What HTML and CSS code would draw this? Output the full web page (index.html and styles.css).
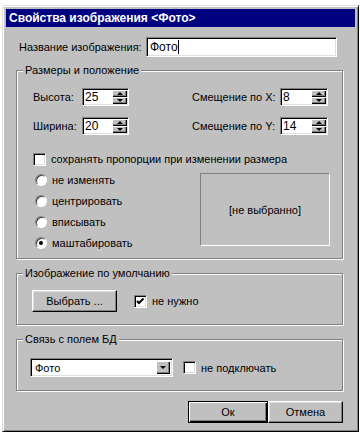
FILE: index.html
```html
<!DOCTYPE html>
<html lang="ru">
<head>
    <meta charset="UTF-8">
    <title>Свойства изображения</title>
    <link rel="stylesheet" href="styles.css">
</head>
<body>
    <div class="window">
        <div class="titlebar">Свойства изображения &lt;Фото&gt;</div>
        <div class="content">
            <div class="name-row">
                <label>Название изображения:</label>
                <div class="field name"><span>Фото</span><span class="caret"></span></div>
            </div>

            <fieldset class="group sizes">
                <legend>Размеры и положение</legend>
                <div class="group-body">
                    <div class="spin-grid">
                        <div class="spin-item left">
                            <label>Высота:</label>
                            <div class="field spin"><span class="val">25</span><div class="spin-btns"><span class="up"></span><span class="down"></span></div></div>
                        </div>
                        <div class="spin-item right">
                            <label>Смещение по X:</label>
                            <div class="field spin"><span class="val">8</span><div class="spin-btns"><span class="up"></span><span class="down"></span></div></div>
                        </div>
                        <div class="spin-item left">
                            <label>Ширина:</label>
                            <div class="field spin"><span class="val">20</span><div class="spin-btns"><span class="up"></span><span class="down"></span></div></div>
                        </div>
                        <div class="spin-item right">
                            <label>Смещение по Y:</label>
                            <div class="field spin"><span class="val">14</span><div class="spin-btns"><span class="up"></span><span class="down"></span></div></div>
                        </div>
                    </div>

                    <div class="check-row keep">
                        <span class="checkbox"></span>
                        <span>сохранять пропорции при изменении размера</span>
                    </div>

                    <div class="mode-row">
                        <div class="radios">
                            <div class="radio-row"><span class="radio"></span>не изменять</div>
                            <div class="radio-row"><span class="radio"></span>центрировать</div>
                            <div class="radio-row"><span class="radio"></span>вписывать</div>
                            <div class="radio-row"><span class="radio checked"></span>маштабировать</div>
                        </div>
                        <div class="preview">[не выбранно]</div>
                    </div>
                </div>
            </fieldset>

            <fieldset class="group default-img">
                <legend>Изображение по умолчанию</legend>
                <div class="group-body row">
                    <button type="button" class="btn pick">Выбрать ...</button>
                    <div class="check-row">
                        <span class="checkbox">
                            <svg width="9" height="9" viewBox="0 0 9 9"><path d="M1 4 L3 6 L7.5 1.5" fill="none" stroke="#000" stroke-width="2"/></svg>
                        </span>
                        <span>не нужно</span>
                    </div>
                </div>
            </fieldset>

            <fieldset class="group db-link">
                <legend>Связь с полем БД</legend>
                <div class="group-body row">
                    <div class="field combo"><span class="val">Фото</span><span class="drop"></span></div>
                    <div class="check-row">
                        <span class="checkbox"></span>
                        <span>не подключать</span>
                    </div>
                </div>
            </fieldset>

            <div class="buttons">
                <button type="button" class="btn ok">Ок</button>
                <button type="button" class="btn cancel">Отмена</button>
            </div>
        </div>
    </div>
</body>
</html>
```

FILE: styles.css
```css
body {
    margin: 0;
    background-color: #fff;
    font-family: 'Liberation Sans', Arial, sans-serif;
    font-size: 11px;
    color: #000;
    white-space: nowrap;
}
.window {
    margin: 5px 0 0 2px;
    width: 357px;
    height: 427px;
    box-sizing: border-box;
    padding: 3px;
    background-color: #c0c0c0;
    border: 1px solid;
    border-color: #dfdfdf #000 #000 #dfdfdf;
    box-shadow: inset 1px 1px #fff, inset -1px -1px #808080;
}
.titlebar {
    height: 18px;
    line-height: 18px;
    padding-left: 3px;
    background-color: #000080;
    color: #fff;
    font-weight: bold;
    font-size: 12px;
}
.content {
    padding: 10px 12px 0 10px;
}

/* sunken white box */
.field {
    position: relative;
    box-sizing: border-box;
    background-color: #fff;
    border: 1px solid;
    border-color: #808080 #fff #fff #808080;
    box-shadow: inset 1px 1px #000, inset -1px -1px #dfdfdf;
    display: flex;
    align-items: center;
}
.name-row {
    display: flex;
    align-items: center;
    height: 20px;
}
.name-row label {
    width: 127px;
    padding-left: 3px;
}
.field.name {
    width: 191px;
    height: 20px;
    padding-left: 3px;
    font-size: 12px;
}
.caret {
    width: 1px;
    height: 14px;
    background-color: #000;
}

.group {
    width: 327px;
    box-sizing: border-box;
    margin: 6px 0 0;
    padding: 0 0 0 6px;
    border: 1px solid #808080;
    box-shadow: 1px 1px 0 #fff, inset 1px 1px 0 #fff;
}
.group legend {
    padding: 0 2px;
    line-height: 14px;
    background-color: #c0c0c0;
}
.group-body {
    padding: 11px 0 5px 10px;
}

.spin-grid {
    display: grid;
    grid-template-columns: 159px auto;
    row-gap: 11px;
}
.spin-item {
    display: flex;
    align-items: center;
    height: 18px;
}
.spin-item.left label {
    width: 49px;
}
.spin-item.right label {
    width: 88px;
}
.field.spin {
    width: 47px;
    height: 18px;
    padding-left: 2px;
    font-size: 12px;
}
.spin-item.right .field.spin {
    width: 48px;
}
.spin-btns {
    position: absolute;
    right: 1px;
    top: 1px;
    bottom: 1px;
    width: 15px;
    display: flex;
    flex-direction: column;
}
.spin-btns span,
.drop {
    flex: 1;
    display: flex;
    align-items: center;
    justify-content: center;
    background-color: #c0c0c0;
    box-shadow: inset 1px 1px #fff, inset -1px -1px #000, inset -2px -2px #808080;
}
.spin-btns .up::after {
    content: '';
    border-left: 3px solid transparent;
    border-right: 3px solid transparent;
    border-bottom: 3px solid #000;
}
.spin-btns .down::after,
.drop::after {
    content: '';
    border-left: 3px solid transparent;
    border-right: 3px solid transparent;
    border-top: 3px solid #000;
}

.check-row {
    display: flex;
    align-items: center;
    gap: 5px;
}
.check-row.keep {
    margin-top: 17px;
    height: 14px;
}
.checkbox {
    width: 13px;
    height: 13px;
    box-sizing: border-box;
    background-color: #fff;
    border: 1px solid;
    border-color: #808080 #fff #fff #808080;
    box-shadow: inset 1px 1px #000, inset -1px -1px #dfdfdf;
    display: flex;
    align-items: center;
    justify-content: center;
}

.mode-row {
    display: flex;
    margin-top: 3px;
}
.radios {
    width: 167px;
}
.radio-row {
    display: flex;
    align-items: center;
    gap: 5px;
    height: 21px;
}
.radio {
    width: 12px;
    height: 12px;
    margin-left: 2px;
    box-sizing: border-box;
    border-radius: 50%;
    background-color: #fff;
    border: 1px solid;
    border-color: #808080 #fff #fff #808080;
    box-shadow: inset 1px 1px #404040;
    display: flex;
    align-items: center;
    justify-content: center;
}
.radio.checked::after {
    content: '';
    width: 4px;
    height: 4px;
    border-radius: 50%;
    background-color: #000;
}
.preview {
    width: 130px;
    height: 73px;
    margin-top: 4px;
    box-sizing: border-box;
    border: 1px solid;
    border-color: #808080 #fff #fff #808080;
    display: flex;
    align-items: center;
    justify-content: center;
}

.default-img,
.db-link {
    margin-top: 7px;
}
.group-body.row {
    display: flex;
    align-items: center;
}
.default-img .group-body {
    padding: 10px 0 12px 9px;
    gap: 17px;
}
.db-link .group-body {
    padding: 12px 0 13px 7px;
    gap: 10px;
}

.btn {
    box-sizing: border-box;
    height: 22px;
    padding: 0;
    font-family: inherit;
    font-size: 11px;
    color: #000;
    background-color: #c0c0c0;
    border: 1px solid;
    border-color: #fff #000 #000 #fff;
    box-shadow: inset -1px -1px #808080, inset 1px 1px #dfdfdf;
    border-radius: 0;
}
.btn.pick {
    width: 85px;
}
.field.combo {
    width: 143px;
    height: 19px;
    padding-left: 4px;
    font-size: 11px;
}
.drop {
    position: absolute;
    right: 2px;
    top: 2px;
    bottom: 2px;
    width: 14px;
}

.buttons {
    display: flex;
    justify-content: flex-end;
    margin-top: 10px;
}
.btn.ok {
    width: 80px;
    border-color: #000;
    box-shadow: inset 1px 1px #fff, inset -1px -1px #000, inset -2px -2px #808080;
}
.btn.cancel {
    width: 75px;
}
```
